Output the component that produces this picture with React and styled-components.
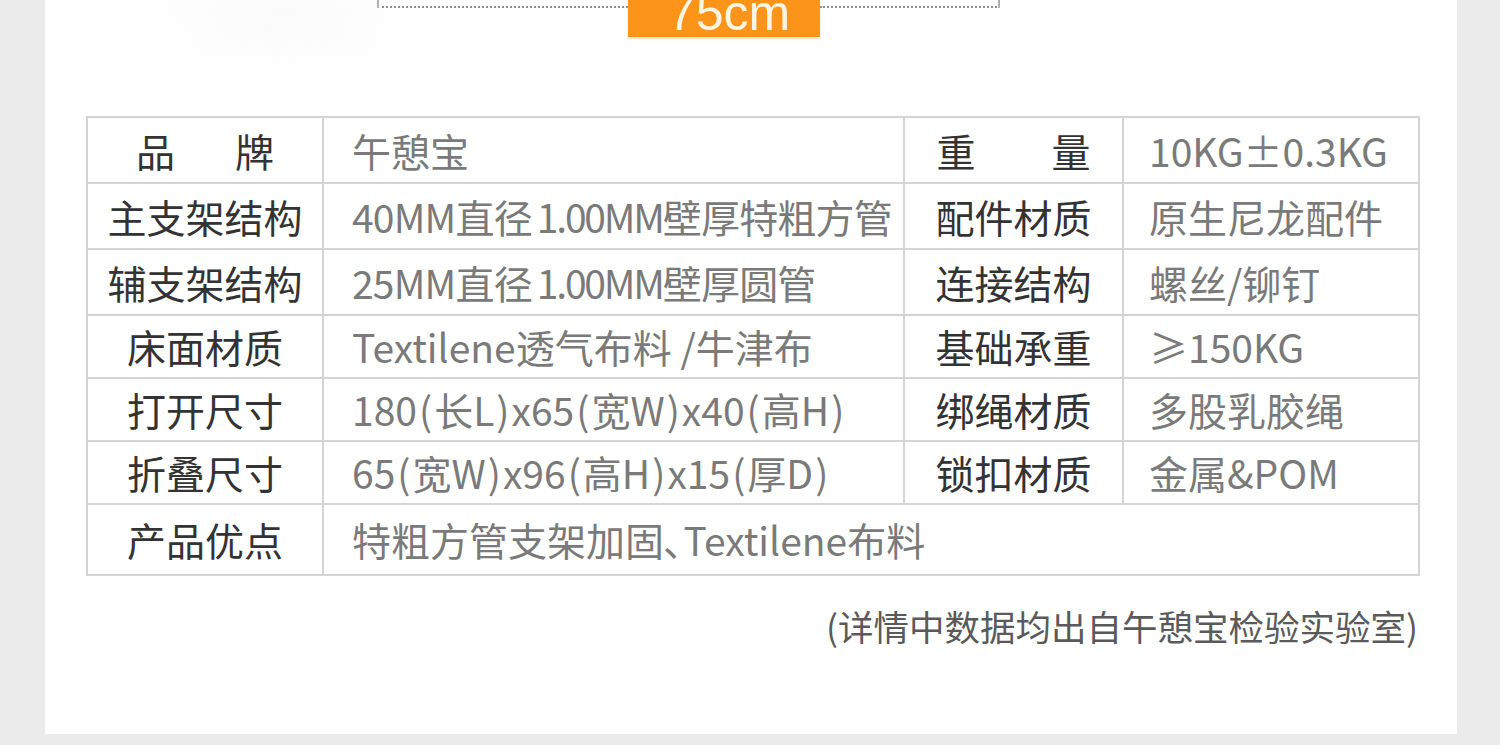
import React from "react";
import styled, { createGlobalStyle } from "styled-components";

const Global = createGlobalStyle`
  html, body { margin: 0; padding: 0; }
  body {
    background: #ebebeb;
    font-family: "Noto Sans CJK SC", "Noto Sans", sans-serif;
  }
`;

const Page = styled.div`
  width: 1500px;
  height: 745px;
  overflow: hidden;
  background: #ebebeb;
`;

const Panel = styled.div`
  position: relative;
  margin-left: 45px;
  width: 1412px;
  height: 734px;
  background: #ffffff;
  padding: 0 39px 0 41px;
  box-sizing: border-box;
  display: flex;
  flex-direction: column;
`;

const Shadow = styled.div`
  position: absolute;
  left: ${(p) => p.$x}px;
  top: ${(p) => p.$y}px;
  width: ${(p) => p.$w}px;
  height: ${(p) => p.$h}px;
  border-radius: 50%;
  background: #f4f4f4;
  filter: blur(12px);
  opacity: 0.3;
`;

const Dimension = styled.div`
  display: flex;
  align-items: flex-start;
  margin-left: 291px;
  height: 37px;
`;

const DotLine = styled.div`
  width: ${(p) => p.$w}px;
  margin-top: 6px;
  height: 0;
  border-top: 2px dotted #8f8f8f;
  position: relative;
`;

const Tick = styled.span`
  position: absolute;
  top: -8px;
  ${(p) => (p.$side === "left" ? "left: 0;" : "right: 0;")}
  width: 2px;
  height: 8px;
  background: #b0b0b0;
`;

const SizeTag = styled.div`
  width: 192px;
  height: 37px;
  background: #fb9418;
  box-shadow: 0 2px 2px rgba(251, 180, 80, 0.35);
  display: flex;
  justify-content: center;
  align-items: flex-end;
  overflow: hidden;
  color: #fff5e2;
  font-family: "Liberation Sans", Arial, sans-serif;
  font-size: 50px;
  line-height: 1;
  padding-left: 10px;
  box-sizing: border-box;
`;

const TagText = styled.span`
  display: block;
  margin-bottom: -1px;
`;

const SpecTable = styled.table`
  margin-top: 79px;
  width: 1332px;
  border-collapse: collapse;
  table-layout: fixed;
  border: 2px solid #d4d4d4;
`;

const Row = styled.tr`
  height: ${(p) => p.$h}px;
`;

const LabelCell = styled.td`
  border: 2px solid #d4d4d4;
  padding: 0;
  text-align: center;
  vertical-align: middle;
  color: #333333;
  font-size: 39px;
  line-height: 1;
  white-space: nowrap;
`;

const ValueCell = styled.td`
  border: 2px solid #d4d4d4;
  padding: 0 0 0 ${(p) => p.$pad}px;
  text-align: left;
  vertical-align: middle;
  color: #7a7a7a;
  font-size: 39px;
  line-height: 1;
  white-space: nowrap;
  letter-spacing: ${(p) => (p.$tight ? "-0.8px" : "0")};
`;

const Spread = styled.span`
  display: inline-flex;
  justify-content: space-between;
  width: ${(p) => p.$w}px;
`;

const Bracket = styled.span`
  margin: 0 2px;
`;

const Tight = styled.span`
  letter-spacing: -2.2px;
  margin-left: 5px;
`;

const Note = styled.div`
  margin-top: 29px;
  width: 1332px;
  text-align: right;
  color: #5a5a5a;
  font-size: 35.5px;
  line-height: 1.2;
`;

const Label = ({ text, spread }) =>
  spread ? (
    <Spread $w={spread}>
      {text.split("").map((c, i) => (
        <span key={i}>{c}</span>
      ))}
    </Spread>
  ) : (
    text
  );

const Dim = ({ parts }) =>
  parts.map((p, i) =>
    Array.isArray(p) ? (
      <React.Fragment key={i}>
        <Bracket>(</Bracket>
        {p[0]}
        <Bracket>)</Bracket>
      </React.Fragment>
    ) : (
      <React.Fragment key={i}>{p}</React.Fragment>
    )
  );

const rows = [
  { h: 66, l1: "品牌", s1: 138, v1: "午憩宝", l2: "重量", s2: 154, v2: "10KG±0.3KG" },
  {
    h: 66,
    l1: "主支架结构",
    tight: true,
    v1: (
      <>
        40MM直径<Tight>1.00MM</Tight>壁厚特粗方管
      </>
    ),
    l2: "配件材质",
    v2: "原生尼龙配件",
  },
  {
    h: 66,
    l1: "辅支架结构",
    tight: true,
    v1: (
      <>
        25MM直径<Tight>1.00MM</Tight>壁厚圆管
      </>
    ),
    l2: "连接结构",
    v2: "螺丝/铆钉",
  },
  { h: 63, l1: "床面材质", v1: "Textilene透气布料 /牛津布", l2: "基础承重", v2: "≥150KG" },
  {
    h: 63,
    l1: "打开尺寸",
    v1: <Dim parts={["180", ["长L"], "x65", ["宽W"], "x40", ["高H"]]} />,
    l2: "绑绳材质",
    v2: "多股乳胶绳",
  },
  {
    h: 63,
    l1: "折叠尺寸",
    v1: <Dim parts={["65", ["宽W"], "x96", ["高H"], "x15", ["厚D"]]} />,
    l2: "锁扣材质",
    v2: "金属&POM",
  },
];

export default function App() {
  return (
    <Page>
      <Global />
      <Panel>
        <Shadow $x={110} $y={-16} $w={240} $h={44} />
        <Shadow $x={140} $y={22} $w={200} $h={36} />
        <Dimension>
          <DotLine $w={251}>
            <Tick $side="left" />
          </DotLine>
          <SizeTag>
            <TagText>75cm</TagText>
          </SizeTag>
          <DotLine $w={180}>
            <Tick $side="right" />
          </DotLine>
        </Dimension>
        <SpecTable>
          <colgroup>
            <col style={{ width: 236 }} />
            <col style={{ width: 581 }} />
            <col style={{ width: 219 }} />
            <col style={{ width: 296 }} />
          </colgroup>
          <tbody>
            {rows.map((r, i) => (
              <Row key={i} $h={r.h}>
                <LabelCell>
                  <Label text={r.l1} spread={r.s1} />
                </LabelCell>
                <ValueCell $pad={28} $tight={r.tight}>
                  {r.v1}
                </ValueCell>
                <LabelCell>
                  <Label text={r.l2} spread={r.s2} />
                </LabelCell>
                <ValueCell $pad={25}>{r.v2}</ValueCell>
              </Row>
            ))}
            <Row $h={71}>
              <LabelCell>产品优点</LabelCell>
              <ValueCell $pad={28} colSpan={3}>
                特粗方管支架加固､Textilene布料
              </ValueCell>
            </Row>
          </tbody>
        </SpecTable>
        <Note>(详情中数据均出自午憩宝检验实验室)</Note>
      </Panel>
    </Page>
  );
}
